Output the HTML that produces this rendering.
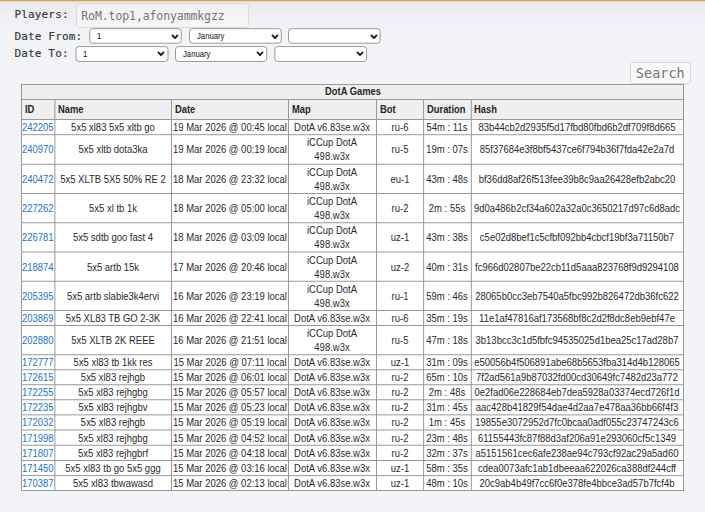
<!DOCTYPE html>
<html><head><meta charset="utf-8"><title>DotA Games</title>
<style>
html,body{margin:0;padding:0}
body{width:705px;height:512px;overflow:hidden;position:relative;
 background:#f3f4f7;font-family:"Liberation Sans",Arial,sans-serif;font-size:12px;color:#222}
#topbar{position:absolute;left:0;top:0;width:705px;height:1px;background:#d9a753}
#topbar2{position:absolute;left:0;top:1px;width:705px;height:1px;background:#e3d6c2}
#topshadow{position:absolute;left:0;top:2px;width:705px;height:34px;
 background:linear-gradient(#e8e9ed,#eeeff3 35%,#f3f4f7)}
.lbl{position:absolute;left:14.4px;font-family:"DejaVu Sans Mono","Liberation Mono",monospace;
 font-size:11px;letter-spacing:.17px;color:#363636;white-space:nowrap;line-height:14px;-webkit-text-stroke:.15px #363636}
#players{position:absolute;left:76px;top:3px;width:173.2px;height:24.9px;box-sizing:border-box;
 border:1px solid #d9dade;border-radius:3.5px;background:rgba(255,255,255,.3);
 font-family:"DejaVu Sans Mono","Liberation Mono",monospace;font-size:11.5px;letter-spacing:-.1px;color:#757575;
 line-height:24.6px;padding-left:4.3px;white-space:nowrap}
.sel{position:absolute;font-size:8.3px;color:#111;white-space:nowrap}
.sel span{position:absolute;left:7.8px;display:block;line-height:10px;transform:scaleX(.93);transform-origin:0 50%}
.sel svg{position:absolute;right:3.1px;width:8px;height:5.6px}
#search{position:absolute;left:630px;top:62px;width:60.6px;height:21.8px;box-sizing:border-box;
 border:1px solid #d9dadd;border-radius:3px;background:#f9f9fa;
 font-family:"DejaVu Sans Mono","Liberation Mono",monospace;font-size:13.3px;letter-spacing:.1px;color:#727272;
 text-align:center;line-height:21.6px;white-space:nowrap}
#tbl{position:absolute;left:0;top:0;width:705px;height:512px;font-size:11.5px;line-height:14px}
#tbl i{position:absolute;display:block;background:#999}
#tbl .bg{position:absolute}
#tbl .r{position:absolute;left:0;width:705px}
#tbl .c{position:absolute;top:50%;white-space:nowrap;text-align:center;color:#2a2a2a;
 transform:translate(-50%,-50%) translateY(-.3px) scaleX(0.824)}
#tbl .l{position:absolute;top:50%;white-space:nowrap;transform-origin:0 50%;
 transform:translate(0,-50%) translateY(-.3px) scaleX(0.824)}
#tbl .id{color:#2072d6}
#tbl .c2{transform:translate(-50%,-50%) translateY(.3px) scaleX(0.824)}
#tbl b.l{color:#262626;font-weight:bold;font-size:10.2px;transform:translate(0,-50%) scaleX(.92)}
#tbl b.c{color:#262626;font-weight:bold;font-size:10.2px;transform:translate(-50%,-50%) scaleX(.92)}
</style></head>
<body>
<div id="topshadow"></div><div id="topbar"></div><div id="topbar2"></div>
<div class="lbl" style="top:7.5px">Players:</div>
<div id="players">RoM.top1,afonyammkgzz</div>
<div class="lbl" style="top:29.7px">Date From:</div>
<div class="lbl" style="top:46.9px">Date To:</div>
<svg width="705" height="70" style="position:absolute;left:0;top:0" fill="#fff" stroke="#9a9a9a" stroke-width="1"><rect x="89.8" y="28.7" width="91.4" height="14.50" rx="2.8"/><rect x="189.5" y="28.7" width="91.8" height="14.50" rx="2.8"/><rect x="288.5" y="28.7" width="91.6" height="14.50" rx="2.8"/><rect x="76.0" y="46.6" width="92.0" height="14.85" rx="2.8"/><rect x="175.5" y="46.6" width="91.2" height="14.85" rx="2.8"/><rect x="274.8" y="46.6" width="91.8" height="14.85" rx="2.8"/></svg>
<div class="sel" style="left:89.3px;top:28.2px;width:92.4px;height:15.50px"><span style="top:3.15px">1</span><svg viewBox="0 0 8 5.6" style="top:5.60px"><path d="M1.5 1.4 L4 4.2 L6.5 1.4" fill="none" stroke="#1e1e1e" stroke-width="1.9" stroke-linecap="round" stroke-linejoin="round"/></svg></div><div class="sel" style="left:189.0px;top:28.2px;width:92.8px;height:15.50px"><span style="top:3.15px">January</span><svg viewBox="0 0 8 5.6" style="top:5.60px"><path d="M1.5 1.4 L4 4.2 L6.5 1.4" fill="none" stroke="#1e1e1e" stroke-width="1.9" stroke-linecap="round" stroke-linejoin="round"/></svg></div><div class="sel" style="left:288px;top:28.2px;width:92.6px;height:15.50px"><span style="top:3.15px"></span><svg viewBox="0 0 8 5.6" style="top:5.60px"><path d="M1.5 1.4 L4 4.2 L6.5 1.4" fill="none" stroke="#1e1e1e" stroke-width="1.9" stroke-linecap="round" stroke-linejoin="round"/></svg></div>
<div class="sel" style="left:75.5px;top:46.1px;width:93.0px;height:15.85px"><span style="top:2.75px">1</span><svg viewBox="0 0 8 5.6" style="top:4.90px"><path d="M1.5 1.4 L4 4.2 L6.5 1.4" fill="none" stroke="#1e1e1e" stroke-width="1.9" stroke-linecap="round" stroke-linejoin="round"/></svg></div><div class="sel" style="left:175px;top:46.1px;width:92.2px;height:15.85px"><span style="top:2.75px">January</span><svg viewBox="0 0 8 5.6" style="top:4.90px"><path d="M1.5 1.4 L4 4.2 L6.5 1.4" fill="none" stroke="#1e1e1e" stroke-width="1.9" stroke-linecap="round" stroke-linejoin="round"/></svg></div><div class="sel" style="left:274.3px;top:46.1px;width:92.8px;height:15.85px"><span style="top:2.75px"></span><svg viewBox="0 0 8 5.6" style="top:4.90px"><path d="M1.5 1.4 L4 4.2 L6.5 1.4" fill="none" stroke="#1e1e1e" stroke-width="1.9" stroke-linecap="round" stroke-linejoin="round"/></svg></div>
<div id="search">Search</div>
<div id="tbl">
<div class="bg" style="left:21.0px;top:84.0px;width:663.0px;height:407.0px;background:#fff"></div>
<div class="bg" style="left:21.0px;top:84.0px;width:663.0px;height:35.0px;background:#efefef"></div>
<svg width="705" height="512" style="position:absolute;left:0;top:0" fill="#999"><rect x="21.0" y="84.0" width="663.0" height="1"/><rect x="21.0" y="99.0" width="663.0" height="1"/><rect x="21.0" y="119.0" width="663.0" height="1"/><rect x="21.0" y="134.2" width="663.0" height="1"/><rect x="21.0" y="163.75" width="663.0" height="1"/><rect x="21.0" y="193.0" width="663.0" height="1"/><rect x="21.0" y="222.25" width="663.0" height="1"/><rect x="21.0" y="251.5" width="663.0" height="1"/><rect x="21.0" y="280.75" width="663.0" height="1"/><rect x="21.0" y="310.0" width="663.0" height="1"/><rect x="21.0" y="325.0" width="663.0" height="1"/><rect x="21.0" y="354.25" width="663.0" height="1"/><rect x="21.0" y="369.25" width="663.0" height="1"/><rect x="21.0" y="384.25" width="663.0" height="1"/><rect x="21.0" y="399.25" width="663.0" height="1"/><rect x="21.0" y="414.35" width="663.0" height="1"/><rect x="21.0" y="429.5" width="663.0" height="1"/><rect x="21.0" y="444.75" width="663.0" height="1"/><rect x="21.0" y="460.0" width="663.0" height="1"/><rect x="21.0" y="475.1" width="663.0" height="1"/><rect x="21.0" y="490.0" width="663.0" height="1"/><rect x="21.0" y="84.0" width="1" height="407.0"/><rect x="54.4" y="99.0" width="1" height="392.0"/><rect x="170.95" y="99.0" width="1" height="392.0"/><rect x="288.0" y="99.0" width="1" height="392.0"/><rect x="376.0" y="99.0" width="1" height="392.0"/><rect x="423.1" y="99.0" width="1" height="392.0"/><rect x="470.8" y="99.0" width="1" height="392.0"/><rect x="683.0" y="84.0" width="1" height="407.0"/></svg>
<div class="r" style="top:85.0px;height:14.0px"><b class="c" style="left:352.5px">DotA Games</b></div>
<div class="r" style="top:100.0px;height:19.0px"><b class="l" style="left:24.6px">ID</b><b class="l" style="left:58.0px">Name</b><b class="l" style="left:174.54999999999998px">Date</b><b class="l" style="left:291.6px">Map</b><b class="l" style="left:379.6px">Bot</b><b class="l" style="left:426.70000000000005px">Duration</b><b class="l" style="left:474.40000000000003px">Hash</b></div>
<div class="r" style="top:120.0px;height:14.199999999999989px"><span class="l id" style="left:22.0px">242205</span><span class="c" style="left:113.17px">5x5 xl83 5x5 xltb go</span><span class="c" style="left:230.38px">19 Mar 2026 @ 00:45 local</span><span class="c" style="left:331.80px">DotA v6.83se.w3x</span><span class="c" style="left:400.05px">ru-6</span><span class="c" style="left:447.45px">54m : 11s</span><span class="c" style="left:577.40px">83b44cb2d2935f5d17fbd80fbd6b2df709f8d665</span></div>
<div class="r" style="top:135.2px;height:28.55000000000001px"><span class="l id" style="left:22.0px">240970</span><span class="c" style="left:113.17px">5x5 xltb dota3ka</span><span class="c" style="left:230.38px">19 Mar 2026 @ 00:19 local</span><span class="c c2" style="left:331.80px">iCCup DotA<br>498.w3x</span><span class="c" style="left:400.05px">ru-5</span><span class="c" style="left:447.45px">19m : 07s</span><span class="c" style="left:577.40px">85f37684e3f8bf5437ce6f794b36f7fda42e2a7d</span></div>
<div class="r" style="top:164.75px;height:28.25px"><span class="l id" style="left:22.0px">240472</span><span class="c" style="left:113.17px">5x5 XLTB 5X5 50% RE 2</span><span class="c" style="left:230.38px">18 Mar 2026 @ 23:32 local</span><span class="c c2" style="left:331.80px">iCCup DotA<br>498.w3x</span><span class="c" style="left:400.05px">eu-1</span><span class="c" style="left:447.45px">43m : 48s</span><span class="c" style="left:577.40px">bf36dd8af26f513fee39b8c9aa26428efb2abc20</span></div>
<div class="r" style="top:194.0px;height:28.25px"><span class="l id" style="left:22.0px">227262</span><span class="c" style="left:113.17px">5x5 xl tb 1k</span><span class="c" style="left:230.38px">18 Mar 2026 @ 05:00 local</span><span class="c c2" style="left:331.80px">iCCup DotA<br>498.w3x</span><span class="c" style="left:400.05px">ru-2</span><span class="c" style="left:447.45px">2m : 55s</span><span class="c" style="left:577.40px">9d0a486b2cf34a602a32a0c3650217d97c6d8adc</span></div>
<div class="r" style="top:223.25px;height:28.25px"><span class="l id" style="left:22.0px">226781</span><span class="c" style="left:113.17px">5x5 sdtb goo fast 4</span><span class="c" style="left:230.38px">18 Mar 2026 @ 03:09 local</span><span class="c c2" style="left:331.80px">iCCup DotA<br>498.w3x</span><span class="c" style="left:400.05px">uz-1</span><span class="c" style="left:447.45px">43m : 38s</span><span class="c" style="left:577.40px">c5e02d8bef1c5cfbf092bb4cbcf19bf3a71150b7</span></div>
<div class="r" style="top:252.5px;height:28.25px"><span class="l id" style="left:22.0px">218874</span><span class="c" style="left:113.17px">5x5 artb 15k</span><span class="c" style="left:230.38px">17 Mar 2026 @ 20:46 local</span><span class="c c2" style="left:331.80px">iCCup DotA<br>498.w3x</span><span class="c" style="left:400.05px">uz-2</span><span class="c" style="left:447.45px">40m : 31s</span><span class="c" style="left:577.40px">fc966d02807be22cb11d5aaa823768f9d9294108</span></div>
<div class="r" style="top:281.75px;height:28.25px"><span class="l id" style="left:22.0px">205395</span><span class="c" style="left:113.17px">5x5 artb slabie3k4ervi</span><span class="c" style="left:230.38px">16 Mar 2026 @ 23:19 local</span><span class="c c2" style="left:331.80px">iCCup DotA<br>498.w3x</span><span class="c" style="left:400.05px">ru-1</span><span class="c" style="left:447.45px">59m : 46s</span><span class="c" style="left:577.40px">28065b0cc3eb7540a5fbc992b826472db36fc622</span></div>
<div class="r" style="top:311.0px;height:14.0px"><span class="l id" style="left:22.0px">203869</span><span class="c" style="left:113.17px">5x5 XL83 TB GO 2-3K</span><span class="c" style="left:230.38px">16 Mar 2026 @ 22:41 local</span><span class="c" style="left:331.80px">DotA v6.83se.w3x</span><span class="c" style="left:400.05px">ru-6</span><span class="c" style="left:447.45px">35m : 19s</span><span class="c" style="left:577.40px">11e1af47816af173568bf8c2d2f8dc8eb9ebf47e</span></div>
<div class="r" style="top:326.0px;height:28.25px"><span class="l id" style="left:22.0px">202880</span><span class="c" style="left:113.17px">5x5 XLTB 2K REEE</span><span class="c" style="left:230.38px">16 Mar 2026 @ 21:51 local</span><span class="c c2" style="left:331.80px">iCCup DotA<br>498.w3x</span><span class="c" style="left:400.05px">ru-5</span><span class="c" style="left:447.45px">47m : 18s</span><span class="c" style="left:577.40px">3b13bcc3c1d5fbfc94535025d1bea25c17ad28b7</span></div>
<div class="r" style="top:355.25px;height:14.0px"><span class="l id" style="left:22.0px">172777</span><span class="c" style="left:113.17px">5x5 xl83 tb 1kk res</span><span class="c" style="left:230.38px">15 Mar 2026 @ 07:11 local</span><span class="c" style="left:331.80px">DotA v6.83se.w3x</span><span class="c" style="left:400.05px">uz-1</span><span class="c" style="left:447.45px">31m : 09s</span><span class="c" style="left:577.40px">e50056b4f506891abe68b5653fba314d4b128065</span></div>
<div class="r" style="top:370.25px;height:14.0px"><span class="l id" style="left:22.0px">172615</span><span class="c" style="left:113.17px">5x5 xl83 rejhgb</span><span class="c" style="left:230.38px">15 Mar 2026 @ 06:01 local</span><span class="c" style="left:331.80px">DotA v6.83se.w3x</span><span class="c" style="left:400.05px">ru-2</span><span class="c" style="left:447.45px">65m : 10s</span><span class="c" style="left:577.40px">7f2ad561a9b87032fd00cd30649fc7482d23a772</span></div>
<div class="r" style="top:385.25px;height:14.0px"><span class="l id" style="left:22.0px">172255</span><span class="c" style="left:113.17px">5x5 xl83 rejhgbg</span><span class="c" style="left:230.38px">15 Mar 2026 @ 05:57 local</span><span class="c" style="left:331.80px">DotA v6.83se.w3x</span><span class="c" style="left:400.05px">ru-2</span><span class="c" style="left:447.45px">2m : 48s</span><span class="c" style="left:577.40px">0e2fad06e228684eb7dea5928a03374ecd726f1d</span></div>
<div class="r" style="top:400.25px;height:14.100000000000023px"><span class="l id" style="left:22.0px">172235</span><span class="c" style="left:113.17px">5x5 xl83 rejhgbv</span><span class="c" style="left:230.38px">15 Mar 2026 @ 05:23 local</span><span class="c" style="left:331.80px">DotA v6.83se.w3x</span><span class="c" style="left:400.05px">ru-2</span><span class="c" style="left:447.45px">31m : 45s</span><span class="c" style="left:577.40px">aac428b41829f54dae4d2aa7e478aa36bb66f4f3</span></div>
<div class="r" style="top:415.35px;height:14.149999999999977px"><span class="l id" style="left:22.0px">172032</span><span class="c" style="left:113.17px">5x5 xl83 rejhgb</span><span class="c" style="left:230.38px">15 Mar 2026 @ 05:19 local</span><span class="c" style="left:331.80px">DotA v6.83se.w3x</span><span class="c" style="left:400.05px">ru-2</span><span class="c" style="left:447.45px">1m : 45s</span><span class="c" style="left:577.40px">19855e3072952d7fc0bcaa0adf055c23747243c6</span></div>
<div class="r" style="top:430.5px;height:14.25px"><span class="l id" style="left:22.0px">171998</span><span class="c" style="left:113.17px">5x5 xl83 rejhgbg</span><span class="c" style="left:230.38px">15 Mar 2026 @ 04:52 local</span><span class="c" style="left:331.80px">DotA v6.83se.w3x</span><span class="c" style="left:400.05px">ru-2</span><span class="c" style="left:447.45px">23m : 48s</span><span class="c" style="left:577.40px">61155443fc87f88d3af206a91e293060cf5c1349</span></div>
<div class="r" style="top:445.75px;height:14.25px"><span class="l id" style="left:22.0px">171807</span><span class="c" style="left:113.17px">5x5 xl83 rejhgbrf</span><span class="c" style="left:230.38px">15 Mar 2026 @ 04:18 local</span><span class="c" style="left:331.80px">DotA v6.83se.w3x</span><span class="c" style="left:400.05px">ru-2</span><span class="c" style="left:447.45px">32m : 37s</span><span class="c" style="left:577.40px">a5151561cec6afe238ae94c793cf92ac29a5ad60</span></div>
<div class="r" style="top:461.0px;height:14.100000000000023px"><span class="l id" style="left:22.0px">171450</span><span class="c" style="left:113.17px">5x5 xl83 tb go 5x5 ggg</span><span class="c" style="left:230.38px">15 Mar 2026 @ 03:16 local</span><span class="c" style="left:331.80px">DotA v6.83se.w3x</span><span class="c" style="left:400.05px">uz-1</span><span class="c" style="left:447.45px">58m : 35s</span><span class="c" style="left:577.40px">cdea0073afc1ab1dbeeaa622026ca388df244cff</span></div>
<div class="r" style="top:476.1px;height:13.899999999999977px"><span class="l id" style="left:22.0px">170387</span><span class="c" style="left:113.17px">5x5 xl83 tbwawasd</span><span class="c" style="left:230.38px">15 Mar 2026 @ 02:13 local</span><span class="c" style="left:331.80px">DotA v6.83se.w3x</span><span class="c" style="left:400.05px">uz-1</span><span class="c" style="left:447.45px">48m : 10s</span><span class="c" style="left:577.40px">20c9ab4b49f7cc6f0e378fe4bbce3ad57b7fcf4b</span></div>
</div>
</body></html>
